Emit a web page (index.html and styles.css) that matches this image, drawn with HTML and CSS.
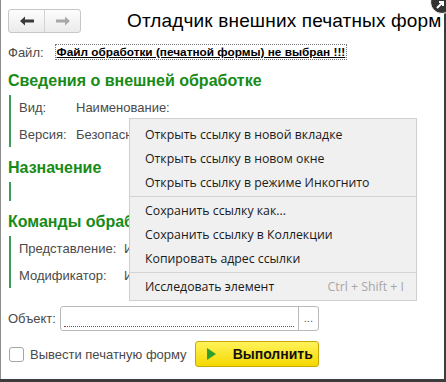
FILE: index.html
```html
<!DOCTYPE html>
<html lang="ru">
<head>
    <meta charset="UTF-8">
    <title>Отладчик внешних печатных форм</title>
    <link rel="stylesheet" href="styles.css">
</head>
<body>
    <div class="window">
        <div class="close-btn">
            <svg width="12" height="12" viewBox="0 0 12 12"><path d="M3 9 L9 3 M5 3 H9 V7" stroke="#fff" stroke-width="2" fill="none"/></svg>
        </div>

        <div class="header">
            <div class="nav">
                <span class="nav-btn">
                    <svg width="16" height="10" viewBox="0 0 16 10"><path d="M1 5 L6 0.5 V3.5 H15 V6.5 H6 V9.5 Z" fill="#3a3a3a"/></svg>
                </span>
                <span class="nav-btn">
                    <svg width="16" height="10" viewBox="0 0 16 10"><path d="M15 5 L10 0.5 V3.5 H1 V6.5 H10 V9.5 Z" fill="#a8a8a8"/></svg>
                </span>
            </div>
            <h1 class="title">Отладчик внешних печатных форм</h1>
        </div>

        <div class="file-row">
            <span class="label">Файл:</span>
            <a href="#" class="file-link">Файл обработки (печатной формы) не выбран !!!</a>
        </div>

        <h2 class="group-title">Сведения о внешней обработке</h2>
        <div class="group">
            <div class="row"><span class="label w-short">Вид:</span><span class="label">Наименование:</span></div>
            <div class="row"><span class="label w-short">Версия:</span><span class="label">Безопасн</span></div>
        </div>

        <h2 class="group-title">Назначение</h2>
        <div class="group group-empty"></div>

        <h2 class="group-title">Команды обработки</h2>
        <div class="group">
            <div class="row"><span class="label w-long">Представление:</span><span class="label">И</span></div>
            <div class="row"><span class="label w-long">Модификатор:</span><span class="label">И</span></div>
        </div>

        <div class="object-row">
            <span class="label">Объект:</span>
            <div class="input">
                <span class="input-field"></span>
                <span class="input-btn">...</span>
            </div>
        </div>

        <div class="footer">
            <label class="check"><span class="checkbox"></span>Вывести печатную форму</label>
            <button class="run-btn">
                <svg width="10" height="12" viewBox="0 0 10 12"><path d="M1 0 L10 6 L1 12 Z" fill="#2ea02e"/></svg>
                Выполнить
            </button>
        </div>

        <!-- context menu over the form -->
        <ul class="context-menu">
            <li>Открыть ссылку в новой вкладке</li>
            <li>Открыть ссылку в новом окне</li>
            <li>Открыть ссылку в режиме Инкогнито</li>
            <li class="sep"></li>
            <li>Сохранить ссылку как...</li>
            <li>Сохранить ссылку в Коллекции</li>
            <li>Копировать адрес ссылки</li>
            <li class="sep"></li>
            <li class="with-key">Исследовать элемент <span class="key">Ctrl + Shift + I</span></li>
        </ul>
    </div>
</body>
</html>
```

FILE: styles.css
```css
* {
    box-sizing: border-box;
    margin: 0;
    padding: 0;
}

body {
    background-color: #3c3c3c;
    font-family: "Liberation Sans", Arial, sans-serif;
    overflow: hidden;
}

/* Window */
.window {
    position: relative;
    width: 444px;
    height: 379px;
    background-color: #fff;
    border-left: 1px solid #8c8c8c;
    padding: 9px 8px 0 7px;
    color: #4a4a4a;
    font-size: 13px;
}

.close-btn {
    position: absolute;
    top: -10px;
    right: -10px;
    width: 24px;
    height: 24px;
    border-radius: 50%;
    background-color: #333;
    border: 1px solid #fff;
    display: flex;
    align-items: flex-end;
    justify-content: flex-start;
    padding: 0 0 2px 3px;
}

/* Header */
.header {
    display: flex;
    align-items: center;
    height: 24px;
}

.nav {
    display: flex;
    flex-shrink: 0;
    width: 73px;
    height: 24px;
    border: 1px solid #c6c6c6;
    border-radius: 3px;
    background: linear-gradient(#fdfdfd, #ebebeb);
}

.nav-btn {
    flex: 1;
    display: flex;
    align-items: center;
    justify-content: center;
}

.nav-btn + .nav-btn {
    border-left: 1px solid #d4d4d4;
}

.title {
    margin-left: 46px;
    font-size: 19px;
    letter-spacing: 0.15px;
    font-weight: normal;
    color: #000;
    white-space: nowrap;
}

/* File row */
.file-row {
    display: flex;
    align-items: center;
    margin-top: 11px;
    height: 16px;
}

.file-link {
    margin-left: 11px;
    padding: 0 1px;
    border: 1px dotted #777;
    color: #000;
    font-weight: bold;
    font-size: 11.8px;
    line-height: 14px;
}

/* Groups */
.group-title {
    color: #178b17;
    font-size: 16px;
    font-weight: bold;
    margin-top: 12px;
    line-height: 18px;
}

.group {
    margin-top: 5px;
    margin-left: 1px;
    border-left: 2px solid #3e9a56;
    padding-left: 8px;
}

.group-empty {
    height: 19px;
}

.row {
    display: flex;
    height: 25px;
    align-items: center;
}

.row + .row {
    margin-top: 2px;
}

.label {
    color: #4a4a4a;
    white-space: nowrap;
}

.w-short {
    width: 57px;
}

.w-long {
    width: 105px;
}

/* Object field */
.object-row {
    display: flex;
    align-items: center;
    margin-top: 18px;
    height: 25px;
}

.input {
    display: flex;
    margin-left: 4px;
    width: 259px;
    height: 25px;
    border: 1px solid #b9b9b9;
    border-radius: 3px;
}

.input-field {
    flex: 1;
    border-bottom: 1px dotted #b33;
    margin: 0 4px 3px 3px;
}

.input-btn {
    width: 20px;
    border-left: 1px solid #b9b9b9;
    text-align: center;
    font-size: 11px;
    line-height: 22px;
    color: #555;
}

/* Footer */
.footer {
    display: flex;
    align-items: center;
    margin-top: 10px;
}

.check {
    display: flex;
    align-items: center;
    color: #4a4a4a;
}

.checkbox {
    width: 15px;
    height: 15px;
    margin: 0 6px 0 1px;
    border: 1px solid #a6a6a6;
    border-radius: 3px;
}

.run-btn {
    display: flex;
    align-items: center;
    gap: 17px;
    margin-left: 8px;
    width: 124px;
    height: 26px;
    padding-left: 10px;
    border: 1px solid #c9a900;
    border-radius: 3px;
    background: linear-gradient(#fff35a, #f5d800);
    font-family: "Liberation Sans", Arial, sans-serif;
    font-weight: bold;
    font-size: 14px;
    color: #111;
}

/* Context menu */
.context-menu {
    position: absolute;
    left: 128px;
    top: 118px;
    width: 288px;
    list-style: none;
    padding: 4px 0 1px;
    background-color: #f0f0f0;
    border: 1px solid #cfcfcf;
    font-family: "Open Sans", "Noto Sans", sans-serif;
    font-size: 12.3px;
    color: #1a1a1a;
}

.context-menu li {
    height: 24px;
    line-height: 24px;
    padding-left: 15px;
}

.context-menu .sep {
    height: 1px;
    margin: 1px 0 2px;
    background-color: #d4d4d4;
}

.context-menu .with-key {
    display: flex;
    justify-content: space-between;
    padding-right: 12px;
}

.key {
    color: #a6a6a6;
}
```
